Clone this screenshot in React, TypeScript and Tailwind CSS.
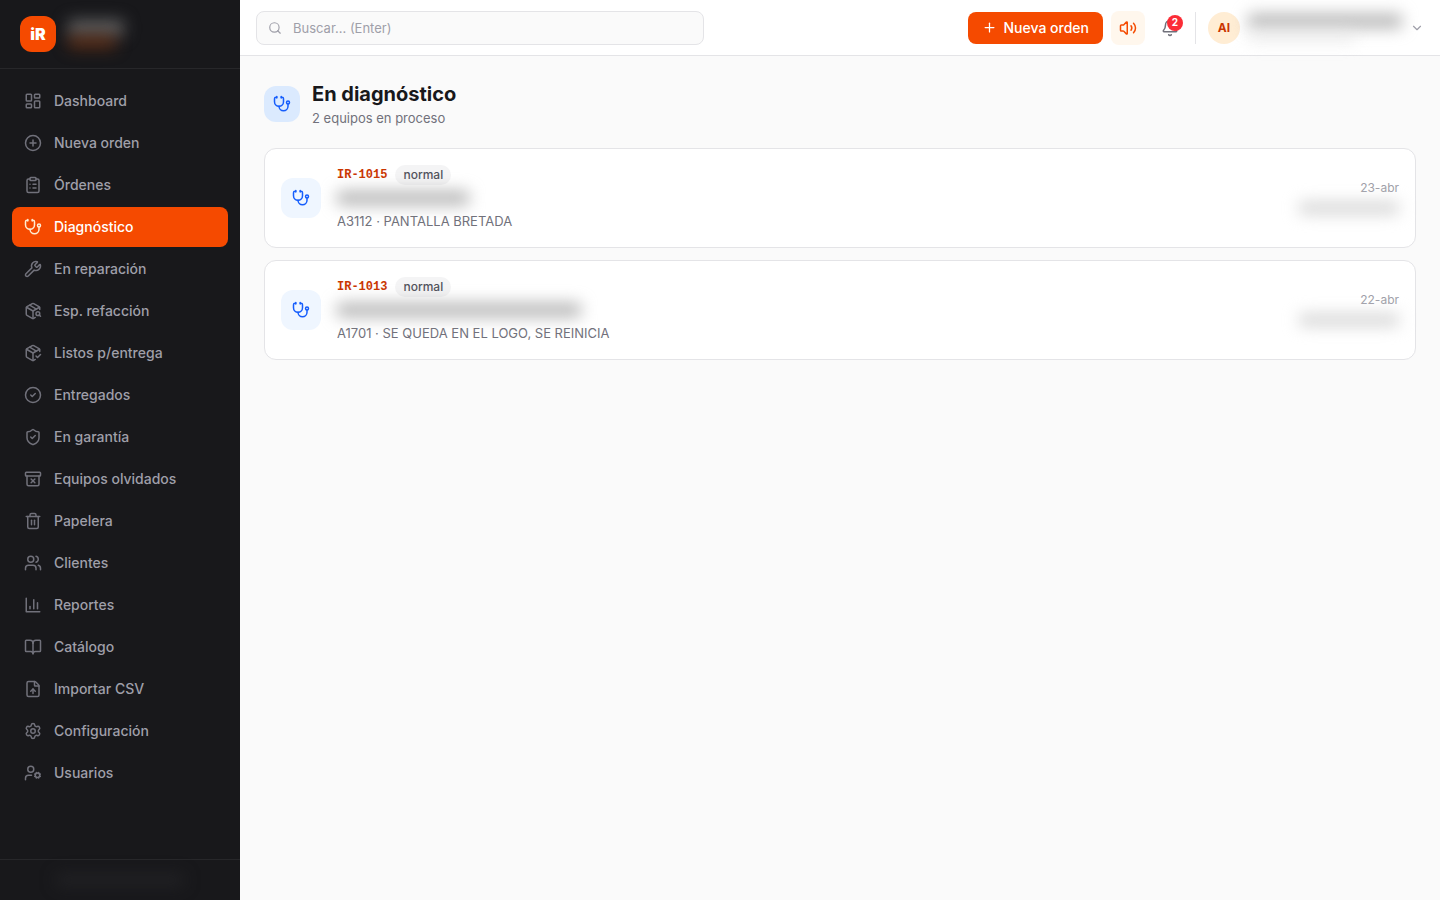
import clsx from "clsx";
import {
  ArchiveX,
  Bell,
  BookOpen,
  ChevronDown,
  CircleCheck,
  CirclePlus,
  ClipboardList,
  FileUp,
  LayoutDashboard,
  PackageCheck,
  PackageSearch,
  Plus,
  Search,
  Settings,
  ShieldCheck,
  Stethoscope,
  Trash2,
  UserCog,
  Users,
  Volume2,
  Wrench,
  createLucideIcon,
  type LucideIcon,
} from "lucide-react";

// Bar chart with square axes
const BarChart = createLucideIcon("bar-chart", [
  ["path", { d: "M3 3v18h18", key: "axes" }],
  ["path", { d: "M18 17V9", key: "b3" }],
  ["path", { d: "M13 17V5", key: "b2" }],
  ["path", { d: "M8 17v-3", key: "b1" }],
]);

type NavItem = { label: string; icon: LucideIcon; active?: boolean };

const navItems: NavItem[] = [
  { label: "Dashboard", icon: LayoutDashboard },
  { label: "Nueva orden", icon: CirclePlus },
  { label: "Órdenes", icon: ClipboardList },
  { label: "Diagnóstico", icon: Stethoscope, active: true },
  { label: "En reparación", icon: Wrench },
  { label: "Esp. refacción", icon: PackageSearch },
  { label: "Listos p/entrega", icon: PackageCheck },
  { label: "Entregados", icon: CircleCheck },
  { label: "En garantía", icon: ShieldCheck },
  { label: "Equipos olvidados", icon: ArchiveX },
  { label: "Papelera", icon: Trash2 },
  { label: "Clientes", icon: Users },
  { label: "Reportes", icon: BarChart },
  { label: "Catálogo", icon: BookOpen },
  { label: "Importar CSV", icon: FileUp },
  { label: "Configuración", icon: Settings },
  { label: "Usuarios", icon: UserCog },
];

type Order = {
  folio: string;
  priority: string;
  detail: string;
  date: string;
  nameWidth: string;
};

const orders: Order[] = [
  { folio: "IR-1015", priority: "normal", detail: "A3112 · PANTALLA BRETADA", date: "23-abr", nameWidth: "w-33" },
  { folio: "IR-1013", priority: "normal", detail: "A1701 · SE QUEDA EN EL LOGO, SE REINICIA", date: "22-abr", nameWidth: "w-61" },
];

// Private data is hidden behind a blurred bar
function Redacted({ className }: { className: string }) {
  return <span aria-hidden="true" className={clsx("block rounded-sm blur-sm", className)} />;
}

function Sidebar() {
  return (
    <aside className="flex w-60 shrink-0 flex-col bg-zinc-900">
      <div className="flex items-center gap-3 border-b border-zinc-800 px-5 py-4">
        <div className="flex size-9 items-center justify-center rounded-xl bg-orange-600 text-base font-black text-white">
          iR
        </div>
        <div>
          <Redacted className="h-4 w-14 bg-neutral-500/80" />
          <Redacted className="h-3 w-12 bg-[#7c3510]/70" />
        </div>
      </div>

      <nav className="flex flex-1 flex-col gap-0.5 p-3">
        {navItems.map(({ label, icon: Icon, active }) => (
          <a
            key={label}
            href="#"
            aria-current={active ? "page" : undefined}
            className={clsx(
              "flex h-10 items-center gap-3 rounded-lg px-3 text-sm font-medium",
              active ? "bg-orange-600 text-white" : "text-zinc-400 hover:bg-zinc-800"
            )}
          >
            <Icon size={18} className={active ? "text-orange-100" : "text-zinc-500"} />
            {label}
          </a>
        ))}
      </nav>

      <div className="flex h-[41px] items-center justify-center border-t border-zinc-800">
        <Redacted className="h-3 w-32 bg-zinc-800/70" />
      </div>
    </aside>
  );
}

function Topbar() {
  return (
    <header className="flex h-14 items-center justify-between border-b border-zinc-200 bg-white px-4">
      <form className="relative w-full max-w-md">
        <Search size={14} className="absolute top-1/2 left-3 -translate-y-1/2 text-zinc-400" />
        <input
          type="search"
          aria-label="Buscar"
          placeholder="Buscar… (Enter)"
          className="block h-[34px] w-full rounded-lg border border-zinc-200 bg-zinc-50 pr-3 pl-9 text-[13px] placeholder:text-zinc-400 focus:outline-none"
        />
      </form>

      <div className="flex items-center">
        <button type="button" className="flex h-8 items-center gap-1.5 rounded-lg bg-orange-600 px-3.5 text-sm font-medium text-white">
          <Plus size={15} />
          Nueva orden
        </button>
        <button type="button" aria-label="Sonido" className="ml-2 flex size-[34px] items-center justify-center rounded-lg bg-orange-50 text-orange-600">
          <Volume2 size={18} />
        </button>
        <button type="button" aria-label="Notificaciones" className="relative ml-2 flex size-[34px] items-center justify-center rounded-lg text-zinc-500">
          <Bell size={18} />
          <span className="absolute top-1 right-1 flex size-4 items-center justify-center rounded-full bg-[#fb2c36] text-[10px] font-bold text-white">
            2
          </span>
        </button>
        <div className="mx-2 h-8 w-px bg-zinc-200" />
        <button type="button" aria-label="Cuenta" className="flex items-center gap-2 pl-1">
          <span className="flex size-8 items-center justify-center rounded-full bg-orange-100 text-xs font-bold text-orange-700">
            AI
          </span>
          <span className="flex flex-col gap-1">
            <Redacted className="h-3.5 w-[154px] bg-neutral-400/80" />
            <Redacted className="h-2.5 w-27 bg-neutral-200/70" />
          </span>
          <ChevronDown size={14} className="text-zinc-400" />
        </button>
      </div>
    </header>
  );
}

function OrderCard({ order }: { order: Order }) {
  return (
    <a href="#" className="flex items-center gap-4 rounded-xl border border-zinc-200 bg-white p-4">
      <span className="flex size-10 shrink-0 items-center justify-center rounded-xl bg-blue-50 text-blue-600">
        <Stethoscope size={18} />
      </span>
      <div className="flex min-w-0 flex-1 flex-col gap-[3px]">
        <div className="flex items-center gap-2">
          <span className="font-['Liberation_Mono',monospace] text-xs font-bold text-orange-700">{order.folio}</span>
          <span className="rounded-full bg-zinc-100 px-2 py-0.5 text-xs font-medium text-zinc-600">{order.priority}</span>
        </div>
        <div className="flex h-5 items-center">
          <Redacted className={clsx("h-3.5 bg-neutral-400/80", order.nameWidth)} />
        </div>
        <p className="truncate text-[13px] leading-5 text-zinc-500">{order.detail}</p>
      </div>
      <div className="flex flex-col items-end gap-1 text-xs text-zinc-400">
        <time>{order.date}</time>
        <span className="flex h-4 items-center">
          <Redacted className="h-3 w-25 bg-neutral-300" />
        </span>
      </div>
    </a>
  );
}

export default function App() {
  return (
    <div className="flex min-h-screen bg-zinc-50 font-[Inter,sans-serif] text-zinc-900">
      <Sidebar />
      <div className="flex min-w-0 flex-1 flex-col">
        <Topbar />
        <main className="flex flex-col gap-5 p-6">
          <div className="flex items-center gap-3">
            <span className="flex size-9 items-center justify-center rounded-xl bg-blue-100 text-blue-600">
              <Stethoscope size={18} />
            </span>
            <div>
              <h1 className="text-xl font-bold">En diagnóstico</h1>
              <p className="text-[13px] leading-5 text-zinc-500">{orders.length} equipos en proceso</p>
            </div>
          </div>
          <div className="flex flex-col gap-3">
            {orders.map((order) => (
              <OrderCard key={order.folio} order={order} />
            ))}
          </div>
        </main>
      </div>
    </div>
  );
}
